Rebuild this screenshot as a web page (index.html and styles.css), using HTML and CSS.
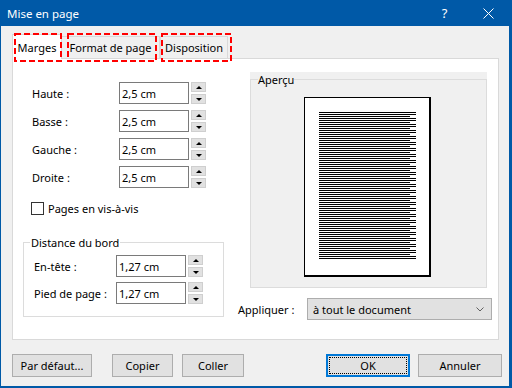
FILE: index.html
```html
<!DOCTYPE html>
<html lang="fr">
<head>
<meta charset="utf-8">
<title>Mise en page</title>
<link rel="stylesheet" href="styles.css">
</head>
<body>
<div class="window">
  <div class="titlebar">
    <span class="title">Mise en page</span>
    <span class="cap cap-help">?</span>
    <span class="cap cap-close"><svg width="11" height="11" viewBox="0 0 11 11"><path d="M0.5 0.5L10.5 10.5M10.5 0.5L0.5 10.5" stroke="#fff" stroke-width="1" fill="none"/></svg></span>
  </div>
  <div class="client">
    <div class="tabs">
      <div class="tab tab-active tab-marges">Marges<span class="mark mark-marges"><svg width="48" height="29"><rect x="1" y="1" width="46" height="27"/></svg></span></div>
      <div class="tab tab-format">Format de page<span class="mark mark-format"><svg width="90" height="29"><rect x="1" y="1" width="88" height="27"/></svg></span></div>
      <div class="tab tab-dispo">Disposition<span class="mark mark-dispo"><svg width="71" height="29"><rect x="1" y="1" width="69" height="27"/></svg></span></div>
    </div>
    <div class="panel">
      <div class="col-left">
        <div class="form">
          <span class="lbl">Haute :</span><div class="field">2,5 cm</div><div class="spin"><span class="sb"><i class="up"></i></span><span class="sb"><i class="down"></i></span></div>
          <span class="lbl">Basse :</span><div class="field">2,5 cm</div><div class="spin"><span class="sb"><i class="up"></i></span><span class="sb"><i class="down"></i></span></div>
          <span class="lbl">Gauche :</span><div class="field">2,5 cm</div><div class="spin"><span class="sb"><i class="up"></i></span><span class="sb"><i class="down"></i></span></div>
          <span class="lbl">Droite :</span><div class="field">2,5 cm</div><div class="spin"><span class="sb"><i class="up"></i></span><span class="sb"><i class="down"></i></span></div>
        </div>
        <div class="check"><span class="box"></span><span>Pages en vis-à-vis</span></div>
        <fieldset class="group">
          <legend>Distance du bord</legend>
          <div class="form form-group">
            <span class="lbl">En-tête :</span><div class="field">1,27 cm</div><div class="spin"><span class="sb"><i class="up"></i></span><span class="sb"><i class="down"></i></span></div>
            <span class="lbl">Pied de page :</span><div class="field">1,27 cm</div><div class="spin"><span class="sb"><i class="up"></i></span><span class="sb"><i class="down"></i></span></div>
          </div>
        </fieldset>
      </div>
      <div class="col-right">
        <div class="preview-wrap">
          <fieldset class="preview">
            <legend>Aperçu</legend>
            <div class="page">
              <svg class="lines" width="97" height="147" viewBox="0 0 97 147">
                <defs>
                  <pattern id="ln" width="97" height="6" patternUnits="userSpaceOnUse">
                    <rect x="0" y="0" width="97" height="1"/>
                    <rect x="0" y="2" width="97" height="1"/>
                    <rect x="0" y="4" width="91" height="1"/>
                  </pattern>
                </defs>
                <rect x="0" y="0" width="97" height="147" fill="url(#ln)"/>
              </svg>
            </div>
          </fieldset>
        </div>
        <div class="apply">
          <span class="apply-lbl">Appliquer :</span>
          <div class="select"><span>à tout le document</span><svg class="chev" width="8" height="5" viewBox="0 0 8 5"><polyline points="0.5,0.5 4,4 7.5,0.5" fill="none" stroke="#606060" stroke-width="1"/></svg></div>
        </div>
      </div>
    </div>
    <div class="buttons">
      <button class="btn b-default">Par défaut...</button>
      <button class="btn b-copy">Copier</button>
      <button class="btn b-paste">Coller</button>
      <button class="btn b-ok">OK</button>
      <button class="btn b-cancel">Annuler</button>
    </div>
  </div>
</div>
</body>
</html>
```
FILE: styles.css
```css
html, body {
  margin: 0;
  padding: 0;
}
body {
  font-family: "Noto Sans", "Liberation Sans", sans-serif;
  font-size: 11px;
  line-height: 15px;
  color: #000;
  background: #fff;
}
.window {
  width: 512px;
  height: 388px;
  box-sizing: border-box;
  background: #0059a7;
  padding: 0 3px 2px 1px;
  display: flex;
  flex-direction: column;
}
.titlebar {
  height: 26px;
  display: flex;
  align-items: center;
  color: #fff;
}
.title {
  padding-left: 6px;
  font-size: 11.5px;
  flex: 1;
}
.cap {
  display: flex;
  align-items: center;
  justify-content: center;
  height: 26px;
}
.cap-help {
  width: 45px;
  font-size: 13px;
}
.cap-close {
  width: 42px;
}
.client {
  flex: 1;
  background: #f0f0f0;
  padding: 8px 7px 0 11px;
}
.tabs {
  display: flex;
  align-items: flex-end;
  height: 24px;
}
.tab {
  position: relative;
  z-index: 1;
  height: 22px;
  box-sizing: border-box;
  border: 1px solid #d9d9d9;
  border-bottom: none;
  background: #f0f0f0;
  display: flex;
  align-items: center;
  justify-content: center;
}
.tab-active {
  height: 25px;
  margin-bottom: -1px;
  background: #fff;
  z-index: 2;
}
.tab-marges { width: 50px; }
.tab-format { width: 98px; border-left: none; }
.tab-dispo { width: 68px; }
.mark {
  position: absolute;
  display: block;
  line-height: 0;
}
.mark svg rect {
  fill: none;
  stroke: #ff0000;
  stroke-width: 2;
  stroke-dasharray: 6 3;
}
.mark-marges { left: 1px; top: -2px; }
.mark-format { left: 5px; top: -4px; }
.mark-dispo { left: 0; top: -4px; }
.panel {
  width: 487px;
  height: 282px;
  box-sizing: border-box;
  border: 1px solid #d9d9d9;
  background: #fff;
  display: flex;
  align-items: flex-start;
}
.col-left {
  width: 225px;
  box-sizing: border-box;
  padding: 23px 0 0 10px;
}
.form {
  display: grid;
  grid-template-columns: 85px 70px 15px;
  column-gap: 2px;
  row-gap: 6px;
  margin-left: 9px;
  align-items: center;
}
.form-group {
  grid-template-columns: 80px 70px 15px;
  row-gap: 5px;
  margin-left: 0;
}
.field {
  height: 22px;
  box-sizing: border-box;
  border: 1px solid #7a7a7a;
  background: #fff;
  padding-left: 2px;
  display: flex;
  align-items: center;
}
.spin {
  height: 22px;
  display: flex;
  flex-direction: column;
  justify-content: space-between;
}
.sb {
  height: 10px;
  box-sizing: border-box;
  background: #e1e1e1;
  border: 1px solid #cfcfcf;
  display: flex;
  align-items: center;
  justify-content: center;
}
.up, .down {
  width: 0;
  height: 0;
  border-left: 3px solid transparent;
  border-right: 3px solid transparent;
}
.up { border-bottom: 3px solid #000; }
.down { border-top: 3px solid #000; }
.check {
  display: flex;
  align-items: center;
  height: 17px;
  margin: 12px 0 0 8px;
}
.box {
  width: 13px;
  height: 13px;
  box-sizing: border-box;
  border: 1px solid #333;
  background: #fff;
  margin-right: 4px;
}
.group {
  width: 201px;
  box-sizing: border-box;
  margin: 18px 0 0 0;
  border: 1px solid #dcdcdc;
  padding: 5px 0 12px 10px;
  min-width: 0;
}
.group legend {
  padding: 0 1px;
  margin-left: -4px;
}
.col-right {
  flex: 1;
  padding-top: 13px;
}
.preview-wrap {
  width: 237px;
  margin-left: 12px;
  background: #f0f0f0;
}
.preview {
  margin: 0;
  border: 1px solid #dcdcdc;
  padding: 10px 0 10px 0;
  min-width: 0;
}
.preview legend {
  padding: 0;
  margin-left: 7px;
}
.page {
  width: 127px;
  height: 180px;
  box-sizing: border-box;
  margin-left: 53px;
  background: #fff;
  border: 1px solid #000;
  border-right-width: 2px;
  border-bottom-width: 2px;
  padding: 14px 0 0 14px;
}
.lines {
  display: block;
}
.apply {
  display: flex;
  align-items: center;
  margin-top: 10px;
}
.apply-lbl {
  width: 69px;
}
.select {
  width: 185px;
  height: 22px;
  box-sizing: border-box;
  background: #e1e1e1;
  border: 1px solid #adadad;
  padding: 0 7px 0 5px;
  display: flex;
  align-items: center;
  justify-content: space-between;
}
.chev { display: block; }
.buttons {
  display: flex;
  margin-top: 14px;
}
.btn {
  height: 23px;
  box-sizing: border-box;
  background: #e1e1e1;
  border: 1px solid #adadad;
  font: inherit;
  color: #000;
  padding: 0;
}
.b-default { width: 80px; }
.b-copy { width: 61px; margin-left: 20px; }
.b-paste { width: 62px; margin-left: 9px; }
.b-ok {
  width: 84px;
  margin-left: auto;
  border: 2px solid #0078d7;
  outline: 1px dotted #000;
  outline-offset: -4px;
}
.b-cancel { width: 84px; margin-left: 8px; }
```
